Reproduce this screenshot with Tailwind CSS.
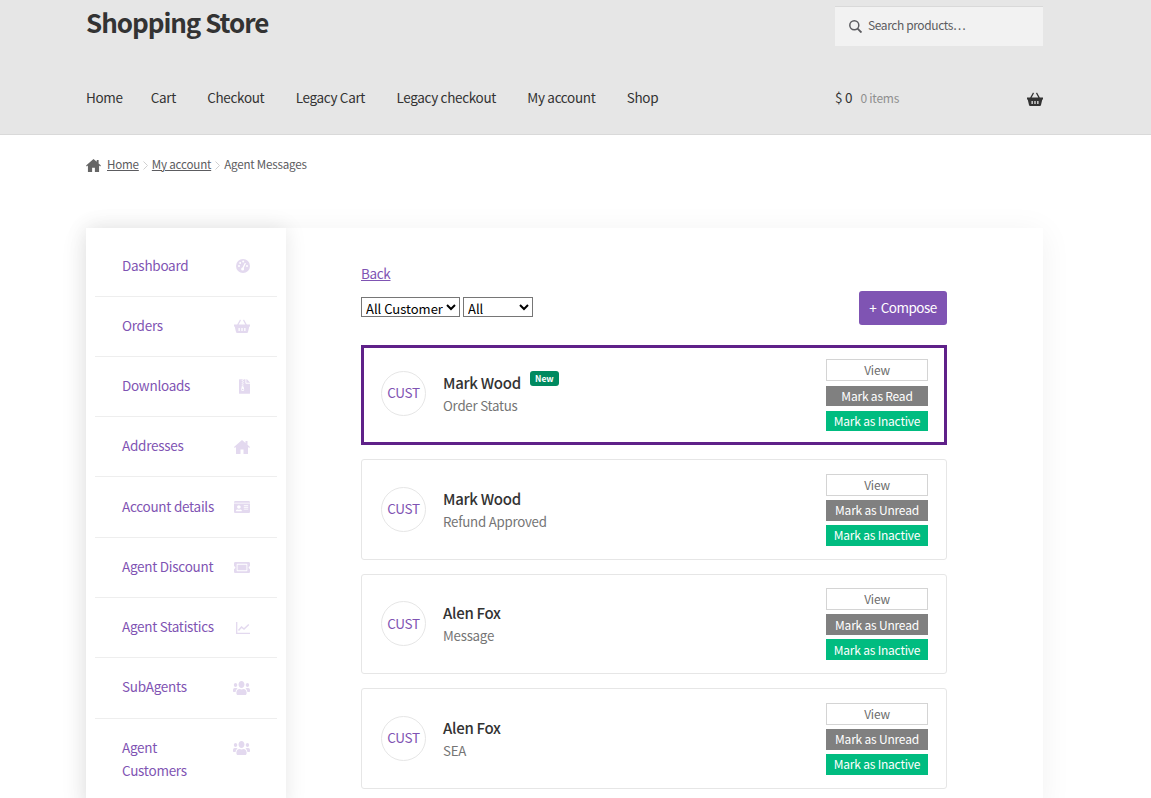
<!DOCTYPE html>
<html lang="en">
<head>
  <meta charset="UTF-8" />
  <meta name="viewport" content="width=device-width, initial-scale=1" />
  <title>Agent Messages - Shopping Store</title>
  <script src="https://cdn.jsdelivr.net/npm/@tailwindcss/browser@4"></script>
</head>
<body class="bg-white h-[798px] overflow-hidden font-['Noto_Sans_CJK_SC','Noto_Sans',sans-serif] text-[#43454b]">
  <svg class="hidden">
    <symbol id="i-home" viewBox="0 0 16 14"><path d="M8 0L0 7l.8 1L2 7v7h4.5V9.5h3V14H14V7l1.2 1 .8-1-2.5-2.2V1h-2v2L8 0z"/></symbol>
    <symbol id="i-basket" viewBox="0 0 16 14"><path fill-rule="evenodd" d="M0 5.5h16v2h-.7L14 13a1.2 1.2 0 0 1-1.2 1H3.2A1.2 1.2 0 0 1 2 13L.7 7.5H0z M4.5 9v3h1.3V9z M7.35 9v3h1.3V9z M10.2 9v3h1.3V9z M3.2 5.5L6 .6l1 .6-2.3 4.3z M12.8 5.5L10 .6l-1 .6 2.3 4.3z"/></symbol>
    <symbol id="i-file" viewBox="0 0 384 512"><path d="M377 105L279.1 7c-4.5-4.5-10.6-7-17-7H256v128h128v-6.1c0-6.3-2.5-12.4-7-16.9zM128.4 336c-17.9 0-32.4 12.1-32.4 27 0 15 14.6 27 32.5 27s32.4-12.1 32.4-27-14.6-27-32.5-27zM224 136V0h-63.6v32h-32V0H24C10.7 0 0 10.7 0 24v464c0 13.3 10.7 24 24 24h336c13.3 0 24-10.7 24-24V160H248c-13.2 0-24-10.8-24-24zM95.9 32h32v32h-32zm32.3 384c-33.2 0-58-30.4-51.4-62.9L96.4 256v-32h32v-32h-32v-32h32v-32h-32V96h32V64h32v32h-32v32h32v32h-32v32h32v32h-32v32h22.1c5.7 0 10.7 4.1 11.8 9.7l17.3 87.7c6.4 32.4-18.4 62.6-51.4 62.6z"/></symbol>
    <symbol id="i-card" viewBox="0 32 576 448" preserveAspectRatio="none"><path d="M528 32H48C21.5 32 0 53.5 0 80v16h576V80c0-26.5-21.5-48-48-48zM0 432c0 26.5 21.5 48 48 48h480c26.5 0 48-21.5 48-48V128H0v304zm352-232c0-4.4 3.6-8 8-8h144c4.4 0 8 3.6 8 8v16c0 4.4-3.6 8-8 8H360c-4.4 0-8-3.6-8-8v-16zm0 64c0-4.4 3.6-8 8-8h144c4.4 0 8 3.6 8 8v16c0 4.4-3.6 8-8 8H360c-4.4 0-8-3.6-8-8v-16zm0 64c0-4.4 3.6-8 8-8h144c4.4 0 8 3.6 8 8v16c0 4.4-3.6 8-8 8H360c-4.4 0-8-3.6-8-8v-16zM176 192c35.3 0 64 28.7 64 64s-28.7 64-64 64-64-28.7-64-64 28.7-64 64-64zM67.1 396.2C75.5 370.5 99.6 352 128 352h8.2c12.3 5.1 25.7 8 39.8 8s27.6-2.9 39.8-8h8.2c28.4 0 52.5 18.5 60.9 44.2 3.2 9.9-5.2 19.8-15.6 19.8H82.7c-10.4 0-18.8-10-15.6-19.8z"/></symbol>
    <symbol id="i-ticket" viewBox="0 64 576 384" preserveAspectRatio="none"><path d="M128 160h320v192H128V160zm400 96c0 26.51 21.49 48 48 48v96c0 26.51-21.49 48-48 48H48c-26.51 0-48-21.49-48-48v-96c26.51 0 48-21.49 48-48s-21.49-48-48-48v-96c0-26.51 21.49-48 48-48h480c26.51 0 48 21.49 48 48v96c-26.51 0-48 21.49-48 48zm-48-104c0-13.255-10.745-24-24-24H120c-13.255 0-24 10.745-24 24v208c0 13.255 10.745 24 24 24h336c13.255 0 24-10.745 24-24V152z"/></symbol>
    <symbol id="i-users" viewBox="0 32 640 448" preserveAspectRatio="none"><path d="M96 224c35.3 0 64-28.7 64-64s-28.7-64-64-64-64 28.7-64 64 28.7 64 64 64zm448 0c35.3 0 64-28.7 64-64s-28.7-64-64-64-64 28.7-64 64 28.7 64 64 64zm32 32h-64c-17.6 0-33.5 7.1-45.1 18.6 40.3 22.1 68.9 62 75.1 109.4h66c17.7 0 32-14.3 32-32v-32c0-35.3-28.7-64-64-64zm-256 0c61.9 0 112-50.1 112-112S381.9 32 320 32 208 82.1 208 144s50.1 112 112 112zm76.8 32h-8.3c-20.8 10-43.9 16-68.5 16s-47.6-6-68.5-16h-8.3C179.6 288 128 339.6 128 403.2V432c0 26.5 21.5 48 48 48h288c26.5 0 48-21.5 48-48v-28.8c0-63.6-51.6-115.2-115.2-115.2zm-223.7-13.4C161.5 263.1 145.6 256 128 256H64c-35.3 0-64 28.7-64 64v32c0 17.7 14.3 32 32 32h65.9c6.3-47.4 34.9-87.3 75.2-109.4z"/></symbol>
  </svg>

  <!-- Header -->
  <header class="h-[135px] bg-[#e6e6e6] border-b border-[#d9d9d9] px-[86px] pr-[108px]">
    <div class="flex justify-between h-[64px]">
      <a href="#" class="text-[26px] leading-[44px] font-semibold tracking-[-1.05px] text-[#333333]">Shopping Store</a>
      <div class="w-[208px] h-[40px] mt-[6px] bg-[#f2f2f2] border-t border-[#d9d9d9] flex items-center pl-[14px] gap-[6px]">
        <svg class="w-[13px] h-[13px]" viewBox="0 0 13 13" fill="none" stroke="#5c5c60" stroke-width="1.5"><circle cx="5.3" cy="5.3" r="4.5"/><path d="M8.6 8.6L12.5 12.5" stroke-width="1.9"/></svg>
        <input class="flex-1 w-0 outline-none text-[12px] leading-[20px] pb-[4px] tracking-[-0.4px] placeholder:text-[#5c5c60]" placeholder="Search products…" />
      </div>
    </div>
    <div class="flex justify-between items-center h-[68px]">
      <nav class="flex pb-[2px] text-[13.5px] leading-[20px] tracking-[-0.33px] text-[#333333] gap-[31.3px]">
        <a href="#" class="-mr-[3.3px]">Home</a><a href="#">Cart</a><a href="#">Checkout</a><a href="#">Legacy Cart</a><a href="#">Legacy checkout</a><a href="#">My account</a><a href="#">Shop</a>
      </nav>
      <div class="w-[208px] flex items-center justify-between">
        <div class="flex items-baseline gap-[8px] pb-[2px]">
          <span class="text-[13.5px] tracking-[-0.2px] text-[#333333]">$ 0</span>
          <span class="text-[12px] tracking-[-0.25px] text-[#8f8f8f]">0 items</span>
        </div>
        <svg class="w-[16px] h-[14px] mt-[2px] fill-[#333333]"><use href="#i-basket" /></svg>
      </div>
    </div>
  </header>

  <!-- Breadcrumb -->
  <div class="flex items-center px-[86px] mt-[20px] h-[20px] text-[11.6px] leading-[20px] tracking-[-0.2px] text-[#5c5c60]">
    <svg class="w-[15px] h-[13px] fill-[#666666] mr-[6px]"><use href="#i-home" /></svg>
    <a href="#" class="underline pb-[2px]">Home</a>
    <svg class="w-[5px] h-[9px] mx-[4px]" viewBox="0 0 5 9" fill="none" stroke="#d0d0d0"><path d="M.5.5l4 4-4 4"/></svg>
    <a href="#" class="underline pb-[2px]">My account</a>
    <svg class="w-[5px] h-[9px] mx-[4px]" viewBox="0 0 5 9" fill="none" stroke="#d0d0d0"><path d="M.5.5l4 4-4 4"/></svg>
    <span class="pb-[2px]">Agent Messages</span>
  </div>

  <!-- Account area -->
  <div class="flex ml-[86px] mt-[53px] w-[957px] shadow-[0_4px_30px_rgba(0,0,0,0.06)]">
    <aside class="w-[200px] shrink-0 px-[9px] bg-white shadow-[0_0_20px_rgba(0,0,0,0.1)] text-[13.5px] leading-[23px] tracking-[-0.27px] text-[#7f54b3] z-10">
      <a href="#" class="flex justify-between items-center h-[68.5px] pl-[27px] pr-[27px] border-b border-[#eeeeee] pt-[9px]">
        <span class="pb-[2px]">Dashboard</span>
        <svg class="w-[14px] h-[14px]" viewBox="0 0 14 14"><circle cx="7" cy="7" r="7" fill="#e3d9ef"/><g fill="#fff"><circle cx="3" cy="7" r="1"/><circle cx="4.2" cy="3.9" r="1"/><circle cx="7.2" cy="2.6" r="1"/><circle cx="11" cy="7" r="1"/></g><path d="M9.4 4L6.8 9.6" stroke="#fff" stroke-width="1.3"/><circle cx="6.6" cy="10" r="1.5" fill="#fff"/></svg>
      </a>
      <a href="#" class="flex justify-between items-center h-[60.3px] pl-[27px] pr-[27px] border-b border-[#eeeeee]"><span class="pb-[2px]">Orders</span><svg class="w-[16px] h-[14px] fill-[#e3d9ef]"><use href="#i-basket" /></svg></a>
      <a href="#" class="flex justify-between items-center h-[60.3px] pl-[27px] pr-[27px] border-b border-[#eeeeee]"><span class="pb-[2px]">Downloads</span><svg class="w-[11px] h-[15px] fill-[#e3d9ef]"><use href="#i-file" /></svg></a>
      <a href="#" class="flex justify-between items-center h-[60.3px] pl-[27px] pr-[27px] border-b border-[#eeeeee]"><span class="pb-[2px]">Addresses</span><svg class="w-[16px] h-[14px] fill-[#e3d9ef]"><use href="#i-home" /></svg></a>
      <a href="#" class="flex justify-between items-center h-[60.3px] pl-[27px] pr-[27px] border-b border-[#eeeeee]"><span class="pb-[2px]">Account details</span><svg class="w-[16px] h-[12px] fill-[#e3d9ef]"><use href="#i-card" /></svg></a>
      <a href="#" class="flex justify-between items-center h-[60.3px] pl-[27px] pr-[27px] border-b border-[#eeeeee]"><span class="pb-[2px]">Agent Discount</span><svg class="w-[16px] h-[11px] fill-[#e3d9ef]"><use href="#i-ticket" /></svg></a>
      <a href="#" class="flex justify-between items-center h-[60.3px] pl-[27px] pr-[27px] border-b border-[#eeeeee]">
        <span class="pb-[2px]">Agent Statistics</span>
        <svg class="w-[14px] h-[12px]" viewBox="0 0 14 12" fill="none" stroke="#e3d9ef" stroke-width="1.3"><path d="M.7 0v11.3H14"/><path d="M2.5 8.5L5.5 5l2.5 2L12.8 2.5" stroke-width="1.5"/></svg>
      </a>
      <a href="#" class="flex justify-between items-center h-[60.3px] pl-[27px] pr-[27px] border-b border-[#eeeeee]"><span class="pb-[2px]">SubAgents</span><svg class="w-[17px] h-[14px] fill-[#e3d9ef]"><use href="#i-users" /></svg></a>
      <a href="#" class="flex justify-between items-start h-[90px] pl-[27px] pr-[27px] pt-[17px]"><span class="w-[70px]">Agent Customers</span><svg class="w-[17px] h-[14px] mt-[5px] fill-[#e3d9ef]"><use href="#i-users" /></svg></a>
    </aside>

    <main class="flex-1 bg-white pl-[75px] pr-[96px] pt-[35px]">
      <a href="#" class="block text-[13.5px] leading-[20px] tracking-[-0.33px] underline text-[#7f54b3]">Back</a>
      <div class="flex justify-between items-start mt-[8px]">
        <div class="flex gap-[3px] mt-[6px] text-[13px] text-black">
          <select class="h-[20px] w-[99px] pb-[2px] border border-[#767676]"><option>All Customer</option></select>
          <select class="h-[20px] w-[70px] pb-[2px] border border-[#767676]"><option>All</option></select>
        </div>
        <button class="h-[34px] w-[88px] pb-[2px] rounded-[3px] bg-[#7f54b3] text-white text-[13.5px] leading-[20px] tracking-[-0.5px] [word-spacing:2px]">+ Compose</button>
      </div>

      <div class="mt-[20px] flex flex-col gap-[14px]">
        <div class="h-[100px] flex items-center border-[3px] border-[#5f2189] pl-[17px] pr-[16px]">
          <div class="w-[45px] h-[45px] mb-[3px] pb-[2px] rounded-full border border-[#e6e6e6] flex items-center justify-center text-[13.5px] tracking-[-0.3px] text-[#7f54b3]">CUST</div>
          <div class="ml-[17px] mb-[3px]">
            <div class="flex items-start"><span class="text-[15px] leading-[24px] tracking-[-0.3px] font-medium text-[#333333]">Mark Wood</span><span class="ml-[9px] mt-[0px] h-[15px] w-[29px] text-center rounded-[3px] bg-[#008a60] text-white text-[8.5px] leading-[15px] font-bold">New</span></div>
            <div class="text-[13.3px] leading-[21px] tracking-[-0.25px] text-[#757575]">Order Status</div>
          </div>
          <div class="ml-auto w-[102px] flex flex-col gap-[5px] text-[12px] text-center tracking-[-0.2px]">
            <button class="h-[22px] border border-[#d4d4d4] bg-white text-[#6d6d6d] leading-[20px]">View</button>
            <button class="h-[20px] pb-[1px] bg-[#808080] text-white leading-[19px]">Mark as Read</button>
            <button class="h-[20px] pb-[1px] bg-[#00bc80] text-white leading-[19px]">Mark as Inactive</button>
          </div>
        </div>

        <div class="h-[100.5px] flex items-center border border-[#e6e6e6] rounded-[3px] pl-[19px] pr-[18px]">
          <div class="w-[45px] h-[45px] pb-[2px] rounded-full border border-[#e6e6e6] flex items-center justify-center text-[13.5px] tracking-[-0.3px] text-[#7f54b3]">CUST</div>
          <div class="ml-[17px]">
            <div class="text-[15px] leading-[24px] tracking-[-0.3px] font-medium text-[#333333]">Mark Wood</div>
            <div class="text-[13.3px] leading-[21px] tracking-[-0.25px] text-[#757575]">Refund Approved</div>
          </div>
          <div class="ml-auto mt-[1px] w-[102px] flex flex-col gap-[4px] text-[12px] text-center tracking-[-0.2px]">
            <button class="h-[22px] border border-[#d4d4d4] bg-white text-[#6d6d6d] leading-[20px]">View</button>
            <button class="h-[21px] pb-[1px] bg-[#808080] text-white leading-[19px]">Mark as Unread</button>
            <button class="h-[21px] pb-[1px] bg-[#00bc80] text-white leading-[19px]">Mark as Inactive</button>
          </div>
        </div>

        <div class="h-[100.5px] flex items-center border border-[#e6e6e6] rounded-[3px] pl-[19px] pr-[18px]">
          <div class="w-[45px] h-[45px] pb-[2px] rounded-full border border-[#e6e6e6] flex items-center justify-center text-[13.5px] tracking-[-0.3px] text-[#7f54b3]">CUST</div>
          <div class="ml-[17px]">
            <div class="text-[15px] leading-[24px] tracking-[-0.3px] font-medium text-[#333333]">Alen Fox</div>
            <div class="text-[13.3px] leading-[21px] tracking-[-0.25px] text-[#757575]">Message</div>
          </div>
          <div class="ml-auto mt-[1px] w-[102px] flex flex-col gap-[4px] text-[12px] text-center tracking-[-0.2px]">
            <button class="h-[22px] border border-[#d4d4d4] bg-white text-[#6d6d6d] leading-[20px]">View</button>
            <button class="h-[21px] pb-[1px] bg-[#808080] text-white leading-[19px]">Mark as Unread</button>
            <button class="h-[21px] pb-[1px] bg-[#00bc80] text-white leading-[19px]">Mark as Inactive</button>
          </div>
        </div>

        <div class="h-[100.5px] flex items-center border border-[#e6e6e6] rounded-[3px] pl-[19px] pr-[18px]">
          <div class="w-[45px] h-[45px] pb-[2px] rounded-full border border-[#e6e6e6] flex items-center justify-center text-[13.5px] tracking-[-0.3px] text-[#7f54b3]">CUST</div>
          <div class="ml-[17px]">
            <div class="text-[15px] leading-[24px] tracking-[-0.3px] font-medium text-[#333333]">Alen Fox</div>
            <div class="text-[13.3px] leading-[21px] tracking-[-0.25px] text-[#757575]">SEA</div>
          </div>
          <div class="ml-auto mt-[1px] w-[102px] flex flex-col gap-[4px] text-[12px] text-center tracking-[-0.2px]">
            <button class="h-[22px] border border-[#d4d4d4] bg-white text-[#6d6d6d] leading-[20px]">View</button>
            <button class="h-[21px] pb-[1px] bg-[#808080] text-white leading-[19px]">Mark as Unread</button>
            <button class="h-[21px] pb-[1px] bg-[#00bc80] text-white leading-[19px]">Mark as Inactive</button>
          </div>
        </div>
      </div>
    </main>
  </div>
</body>
</html>
